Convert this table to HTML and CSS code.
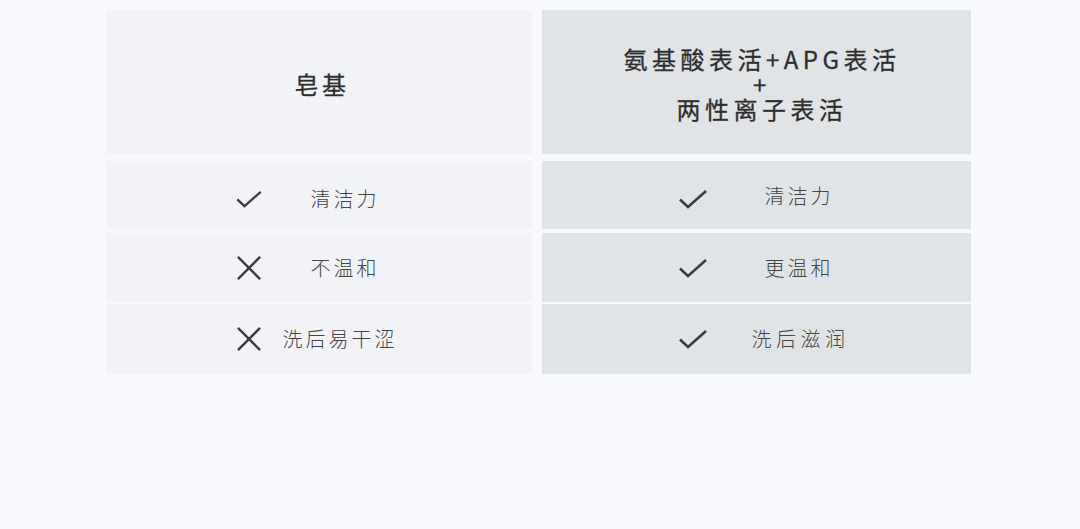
FILE: index.html
```html
<!DOCTYPE html>
<html lang="zh-CN">
<head>
<meta charset="utf-8">
<title>对比</title>
<link rel="stylesheet" href="styles.css">
</head>
<body>
<div class="table">
  <div class="col col-left">
    <div class="cell head"><div class="head-text">皂基</div></div>
    <div class="cell row r1">
      <svg class="ico" viewBox="0 0 30 20"><path d="M2 10.5 L10 18 L28 2" /></svg>
      <span class="txt">清洁力</span>
    </div>
    <div class="cell row r2">
      <svg class="ico" viewBox="0 0 30 26"><path d="M3 1 L27 25 M27 1 L3 25" /></svg>
      <span class="txt">不温和</span>
    </div>
    <div class="cell row r3">
      <svg class="ico" viewBox="0 0 30 26"><path d="M3 1 L27 25 M27 1 L3 25" /></svg>
      <span class="txt long">洗后易干涩</span>
    </div>
  </div>
  <div class="col col-right">
    <div class="cell head"><div class="head-text">氨基酸表活+APG表活<br>+<br>两性离子表活</div></div>
    <div class="cell row r1">
      <svg class="ico" viewBox="0 0 30 20"><path d="M2 10.5 L10 18 L28 2" /></svg>
      <span class="txt">清洁力</span>
    </div>
    <div class="cell row r2">
      <svg class="ico" viewBox="0 0 30 20"><path d="M2 10.5 L10 18 L28 2" /></svg>
      <span class="txt">更温和</span>
    </div>
    <div class="cell row r3">
      <svg class="ico" viewBox="0 0 30 20"><path d="M2 10.5 L10 18 L28 2" /></svg>
      <span class="txt wide">洗后滋润</span>
    </div>
  </div>
</div>
</body>
</html>
```

FILE: styles.css
```css
html, body {
  margin: 0;
  padding: 0;
}
body {
  background: #f8f9fd;
  width: 1080px;
  height: 529px;
  font-family: "Noto Sans CJK SC", "Noto Sans", sans-serif;
  overflow: hidden;
}
.table {
  display: flex;
  gap: 10px;
  padding: 10px 0 0 107px;
}
.col {
  display: flex;
  flex-direction: column;
}
.col-left { width: 425px; }
.col-right { width: 429px; }
.cell {
  display: flex;
  align-items: center;
  box-sizing: border-box;
}
.col-left .cell { background: #f1f3f7; }
.col-right .cell { background: #e1e4e7; }
.head {
  height: 144px;
  justify-content: center;
  margin-bottom: 7px;
}
.head-text {
  color: #2e2e2e;
  font-size: 24px;
  font-weight: 400;
  line-height: 25px;
  letter-spacing: 4.5px;
  padding-left: 11px;
  text-align: center;
  margin-top: 3px;
  -webkit-text-stroke: 0.3px #2e2e2e;
}
.col-left .head-text { letter-spacing: 3.5px; padding-left: 5px; }
.row { height: 68px; }
.r1 { padding-top: 7px; }
.r2 { height: 69px; margin-top: 4px; }
.r3 { height: 70px; margin-top: 2px; }
.ico {
  fill: none;
  stroke: #3c3c3c;
  stroke-width: 2.6;
  stroke-linecap: butt;
  stroke-linejoin: miter;
}
.col-left .ico {
  width: 28px;
  height: 24px;
  margin-left: 128px;
}
.col-left .r1 .ico { height: 18px; }
.col-right .ico {
  width: 30px;
  height: 20px;
  margin-left: 136px;
}
.txt {
  color: #454545;
  font-size: 20px;
  font-weight: 300;
  letter-spacing: 3px;
  padding-left: 3px;
  text-align: center;
  line-height: 28px;
}
.col-left .txt {
  width: 120px;
  margin-left: 19px;
}
.col-left .txt.long { margin-left: 14px; }
.col-right .txt {
  width: 120px;
  margin-left: 28px;
}
.col-right .txt.wide { letter-spacing: 4.5px; padding-left: 4.5px; }
.col-right .r1 .txt { margin-top: -5px; }
```
